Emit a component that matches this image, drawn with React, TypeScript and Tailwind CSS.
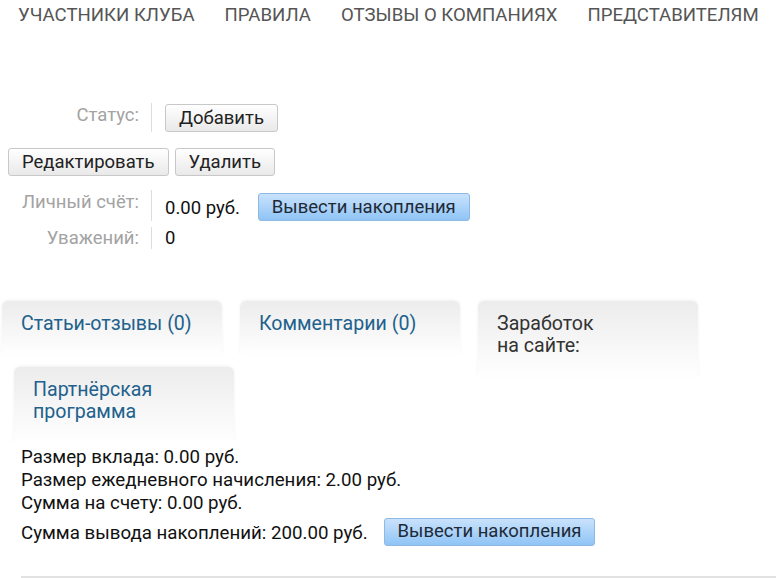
import React from "react";

// ---------------------------------------------------------------------------
// Small pieces
// ---------------------------------------------------------------------------
const font = { fontFamily: "Roboto, 'Liberation Sans', sans-serif" };

function GrayButton({ children }: { children: React.ReactNode }) {
  return (
    <button className="h-[28px] rounded-[3px] border border-[#c8c8c8] bg-gradient-to-b from-white to-[#e9e9e9] px-[13px] text-[18.5px] leading-none text-[#222]">
      {children}
    </button>
  );
}

function BlueButton({ children }: { children: React.ReactNode }) {
  return (
    <button className="h-[28px] rounded-[3px] border border-[#8db9e4] bg-gradient-to-b from-[#c9e2fc] to-[#8fc4f6] px-[13px] text-[18.5px] leading-none text-[#1e2a36]">
      {children}
    </button>
  );
}

function Card({ children, dark = false, className = "" }: { children: React.ReactNode; dark?: boolean; className?: string }) {
  return (
    <div
      className={`w-[220px] rounded-t-[6px] bg-gradient-to-b from-[#ececec] to-white px-[19px] pt-[12px] pb-[20px] text-[19.6px] leading-[22px] shadow-[0_-1px_3px_rgba(0,0,0,0.06)] ${
        dark ? "text-[#333]" : "text-[#21618c]"
      } ${className}`}
    >
      {children}
    </div>
  );
}

const NAV = ["Участники клуба", "Правила", "Отзывы о компаниях", "Представителям"];

// ---------------------------------------------------------------------------
// Page
// ---------------------------------------------------------------------------
export default function App() {
  return (
    <div className="w-[776px] h-[578px] overflow-hidden bg-white" style={font}>
      {/* Top menu */}
      <nav className="flex h-[30px] gap-[30px] pl-[18px] pt-[4px] text-[18.6px] leading-[22px] uppercase text-[#555]">
        {NAV.map((n) => (
          <span key={n} className="whitespace-nowrap">{n}</span>
        ))}
      </nav>

      {/* Profile */}
      <div className="mt-[73px] text-[18.5px]">
        <div className="flex h-[29px]">
          <div className="w-[139px] text-right leading-[24px] text-[#a3a3a3]">Статус:</div>
          <div className="ml-[12px] border-l border-[#ddd] pl-[13px] pt-[1px]">
            <GrayButton>Добавить</GrayButton>
          </div>
        </div>

        <div className="mt-[16px] flex gap-[6px] pl-[8px]">
          <GrayButton>Редактировать</GrayButton>
          <GrayButton>Удалить</GrayButton>
        </div>

        <div className="mt-[14px] flex h-[31px]">
          <div className="w-[139px] text-right leading-[24px] text-[#a3a3a3]">Личный счёт:</div>
          <div className="ml-[12px] flex items-start gap-[18px] border-l border-[#ddd] pl-[13px] pt-[3px]">
            <span className="pt-[3px] leading-[24px] text-[#111]">0.00 руб.</span>
            <BlueButton>Вывести накопления</BlueButton>
          </div>
        </div>

        <div className="mt-[6px] flex h-[22px] leading-[22px]">
          <div className="w-[139px] text-right text-[#a3a3a3]">Уважений:</div>
          <div className="ml-[12px] border-l border-[#ddd] pl-[13px] text-[#111]">0</div>
        </div>
      </div>

      {/* Tabs */}
      <div className="mt-[52px]">
        <div className="flex items-start gap-[18px] pl-[2px]">
          <Card>Статьи-отзывы (0)</Card>
          <Card>Комментарии (0)</Card>
          <Card dark>
            Заработок
            <br />
            на сайте:
          </Card>
        </div>
        <div className="-mt-[10px] pl-[14px]">
          <Card>
            Партнёрская
            <br />
            программа
          </Card>
        </div>
      </div>

      {/* Partner info */}
      <div className="mt-[3px] pl-[21px] text-[18.7px] leading-[23px] text-[#111]">
        <div>Размер вклада: 0.00 руб.</div>
        <div>Размер ежедневного начисления: 2.00 руб.</div>
        <div>Сумма на счету: 0.00 руб.</div>
        <div className="mt-[2px] flex h-[29px] items-center gap-[16px]">
          <span className="pt-[4px]">Сумма вывода накоплений: 200.00 руб.</span>
          <BlueButton>Вывести накопления</BlueButton>
        </div>
        <div className="mt-[30px] border-t-2 border-[#e2e2e2]" />
      </div>
    </div>
  );
}
